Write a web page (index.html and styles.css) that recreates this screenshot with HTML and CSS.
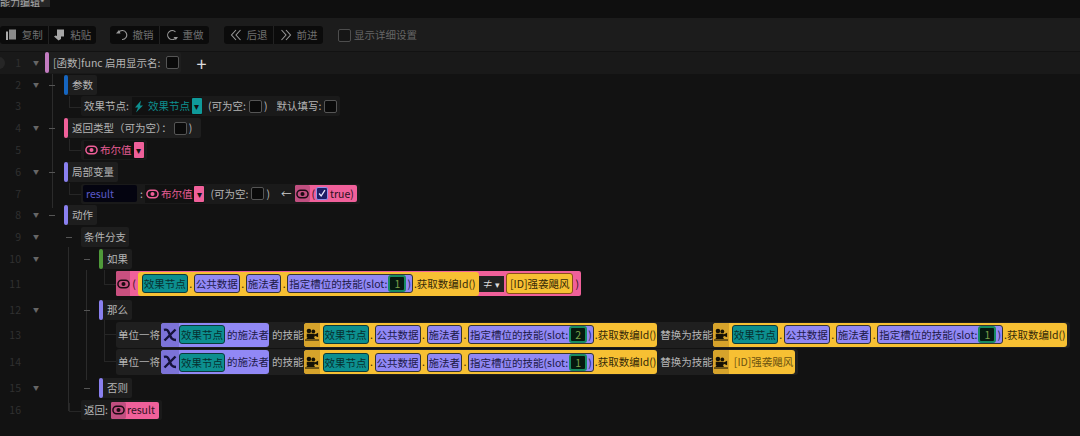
FILE: index.html
```html
<!DOCTYPE html>
<html lang="zh">
<head>
<meta charset="utf-8">
<title>函数编辑</title>
<link rel="stylesheet" href="styles.css">
</head>
<body>
<svg class="defs" width="0" height="0">
  <symbol id="eye" viewBox="0 0 14 10"><rect x="1" y="1" width="12" height="8" rx="4" fill="none" stroke="currentColor" stroke-width="1.600"/><circle cx="7" cy="5" r="2.200" fill="currentColor"/></symbol>
  <symbol id="chi" viewBox="0 0 14 14"><path d="M1 2c3-1 4 0 5.500 4S9 12 13 12M12.500 1.500L1.500 12.500" fill="none" stroke="currentColor" stroke-width="2.400"/></symbol>
  <symbol id="cam" viewBox="0 0 16 14"><circle cx="4.500" cy="3" r="2.600" fill="currentColor"/><circle cx="9.500" cy="3.500" r="2.200" fill="currentColor"/><path d="M2 6h9v4H2zM11 7l4-2v5l-4-1.500zM3 10l-1.500 2h10L10 10z" fill="currentColor"/><path d="M0 13.300h16" stroke="currentColor" stroke-width="1.200"/></symbol>
</svg>

<div class="tabbar"><div class="tab">能力编辑*</div></div>

<div class="toolbar">
  <div class="group first">
    <div class="tool"><svg class="ti" viewBox="0 0 12 12"><path d="M4 0.500h7v10H4z" fill="#8a8a8a"/><path d="M1 2.500h2v8.500h6v0H1z" fill="#aaa"/></svg>复制</div>
    <div class="tool"><svg class="ti" viewBox="0 0 12 12"><path d="M4 0.500h7v7H8v2.500l-2.500 1.500L1 7.500l1.500-1L4 7z" fill="#a5a5a5"/></svg>粘贴</div>
  </div>
  <div class="group">
    <div class="tool"><svg class="ti" viewBox="0 0 12 12"><path d="M2.500 3.500A4.500 4.500 0 1 1 6 10.500" fill="none" stroke="#999" stroke-width="1.100"/><path d="M0 4.500h4.500L3 1z" fill="#999"/></svg>撤销</div>
    <div class="tool"><svg class="ti" viewBox="0 0 12 12"><path d="M9.500 3A4.500 4.500 0 1 0 8.800 9.700" fill="none" stroke="#999" stroke-width="1.100"/><path d="M7.500 8h4.500l-2.200 3z" fill="#999"/></svg>重做</div>
  </div>
  <div class="group third">
    <div class="tool"><svg class="ti" viewBox="0 0 12 12"><path d="M6 1L1.500 6 6 11M10.500 1L6 6l4.500 5" fill="none" stroke="#999" stroke-width="1.100"/></svg>后退</div>
    <div class="tool"><svg class="ti" viewBox="0 0 12 12"><path d="M1.500 1L6 6l-4.500 5M6 1l4.500 5L6 11" fill="none" stroke="#999" stroke-width="1.100"/></svg>前进</div>
  </div>
  <label class="detail"><span class="box dim"></span>显示详细设置</label>
</div>

<main class="editor">
  <div class="guides">
    <i class="g g1"></i><i class="g g2"></i><i class="g g3"></i>
    <i class="t t3"></i><i class="t t5"></i><i class="t t7"></i><i class="t t11"></i><i class="t t13"></i><i class="t t14"></i><i class="t t16"></i>
  </div>

  <div class="row active"><span class="num">1</span><span class="fold">▼</span><div class="head lv0 pinkl"><span class="tx">[函数]func 启用显示名:</span><span class="box"></span></div><span class="plus">+</span></div>

  <div class="row"><span class="num">2</span><span class="fold">▼</span><div class="head lv1 blue"><span class="tx">参数</span></div></div>

  <div class="row"><span class="num">3</span><div class="line lv2">
    <span class="tx">效果节点:</span>
    <span class="typecell teal-t"><svg class="bolt" viewBox="0 0 10 12"><path d="M7 0L1 7h3l-2 5 7-7H6z" fill="currentColor"/></svg>效果节点<span class="drop teal-d">▾</span></span>
    <span class="tx paren">(可为空:</span><span class="box"></span><span class="tx closer">)</span><span class="tx dflt">默认填写:</span><span class="box"></span>
  </div></div>

  <div class="row"><span class="num">4</span><span class="fold">▼</span><div class="head lv1 pink"><span class="tx">返回类型（可为空）：</span><span class="box"></span><span class="tx closer">)</span></div></div>

  <div class="row"><span class="num">5</span><div class="line lv2">
    <span class="typecell pink-t"><svg class="eye"><use href="#eye"/></svg>布尔值<span class="drop pink-d">▾</span></span>
  </div></div>

  <div class="row"><span class="num">6</span><span class="fold">▼</span><div class="head lv1 lilac"><span class="tx">局部变量</span></div></div>

  <div class="row"><span class="num">7</span><div class="line lv2">
    <span class="input">result</span><span class="tx">:</span>
    <span class="typecell pink-t after-colon"><svg class="eye"><use href="#eye"/></svg>布尔值<span class="drop pink-d">▾</span></span>
    <span class="tx paren">(可为空:</span><span class="box"></span><span class="tx closer">)</span><span class="arrow">←</span>
    <span class="bool"><span class="bool-i"><svg class="eye dark"><use href="#eye"/></svg></span>(<span class="box checked"><svg viewBox="0 0 12 12"><path d="M2.500 6l2.500 3 4.500-7" fill="none" stroke="#e8e8ff" stroke-width="1.600"/></svg></span>true)</span>
  </div></div>

  <div class="row"><span class="num">8</span><span class="fold">▼</span><div class="head lv1 lilac"><span class="tx">动作</span></div></div>

  <div class="row"><span class="num">9</span><span class="fold">▼</span><div class="line lv2 plain"><span class="tx">条件分支</span></div></div>

  <div class="row"><span class="num">10</span><span class="fold">▼</span><div class="head lv3 green"><span class="tx">如果</span></div></div>

  <div class="row tall"><span class="num">11</span><div class="cond lv4">
    <span class="cond-i"><svg class="eye dark"><use href="#eye"/></svg></span><span class="par">(</span>
    <span class="yellow">
      <span class="chip teal">效果节点</span><span class="dot">.</span><span class="chip lil">公共数据</span><span class="dot">.</span><span class="chip lil">施法者</span><span class="dot">.</span><span class="chip lil slotchip">指定槽位的技能(slot:<span class="slot">1</span>)</span><span class="call">.获取数编Id()</span>
    </span>
    <span class="neq">≠<em>▾</em></span>
    <span class="yellow idchip">[ID]强袭飓风</span><span class="par">)</span>
  </div></div>

  <div class="row spaced"><span class="num">12</span><span class="fold">▼</span><div class="head lv3 lilac"><span class="tx">那么</span></div></div>

  <div class="row tall"><span class="num">13</span><div class="line lv4 big">
    <span class="lead">单位一将</span>
    <span class="unit"><span class="unit-i"><svg class="chi"><use href="#chi"/></svg></span><span class="chip teal">效果节点</span><span class="owner">的施法者</span></span>
    <span class="tx word">的技能</span>
    <span class="yellow sk"><span class="sk-i"><svg class="cam"><use href="#cam"/></svg></span><span class="chip teal">效果节点</span><span class="dot">.</span><span class="chip lil">公共数据</span><span class="dot">.</span><span class="chip lil">施法者</span><span class="dot">.</span><span class="chip lil slotchip">指定槽位的技能(slot:<span class="slot">2</span>)</span><span class="call">.获取数编Id()</span></span>
    <span class="tx word">替换为技能</span>
    <span class="yellow sk"><span class="sk-i"><svg class="cam"><use href="#cam"/></svg></span><span class="chip teal">效果节点</span><span class="dot">.</span><span class="chip lil">公共数据</span><span class="dot">.</span><span class="chip lil">施法者</span><span class="dot">.</span><span class="chip lil slotchip">指定槽位的技能(slot:<span class="slot">1</span>)</span><span class="call">.获取数编Id()</span></span>
  </div></div>

  <div class="row tall"><span class="num">14</span><div class="line lv4 big">
    <span class="lead">单位一将</span>
    <span class="unit"><span class="unit-i"><svg class="chi"><use href="#chi"/></svg></span><span class="chip teal">效果节点</span><span class="owner">的施法者</span></span>
    <span class="tx word">的技能</span>
    <span class="yellow sk"><span class="sk-i"><svg class="cam"><use href="#cam"/></svg></span><span class="chip teal">效果节点</span><span class="dot">.</span><span class="chip lil">公共数据</span><span class="dot">.</span><span class="chip lil">施法者</span><span class="dot">.</span><span class="chip lil slotchip">指定槽位的技能(slot:<span class="slot">1</span>)</span><span class="call">.获取数编Id()</span></span>
    <span class="tx word">替换为技能</span>
    <span class="yellow sk"><span class="sk-i"><svg class="cam"><use href="#cam"/></svg></span><span class="idtext">[ID]强袭飓风</span></span>
  </div></div>

  <div class="row spaced"><span class="num">15</span><span class="fold">▼</span><div class="head lv3 lilac"><span class="tx">否则</span></div></div>

  <div class="row"><span class="num">16</span><div class="line lv2 ret">
    <span class="tx">返回:</span>
    <span class="retval"><span class="bool-i"><svg class="eye dark"><use href="#eye"/></svg></span>result</span>
  </div></div>
</main>
</body>
</html>
```
FILE: styles.css
```css
* { box-sizing: border-box; }
html, body { margin: 0; height: 100%; }
body {
  width: 1080px;
  height: 436px;
  overflow: hidden;
  background: #121212;
  color: #bdbdbd;
  font: 10.5px/14px "Noto Sans CJK SC", "Noto Sans", sans-serif;
  display: flex;
  flex-direction: column;
}
.defs { position: absolute; }

.tabbar { height: 18px; background: #0f0f0f; flex: none; }
.tab { width: 50px; height: 7px; overflow: hidden; background: #262626; color: #aaa; font-size: 10px; line-height: 6px; }

.toolbar { height: 33px; flex: none; background: #1c1c1c; display: flex; align-items: center; gap: 14px; padding-top: 1px; }
.group { display: flex; width: 99px; height: 18px; background: #0b0b0b; border-radius: 3px; }
.group.first { width: 96px; }
.group.third { margin-left: 1px; }
.tool { flex: 1; display: flex; align-items: center; justify-content: center; gap: 5px; color: #6f6f6f; border-left: 1px solid #222; }
.tool:first-child { border-left: 0; }
.ti { width: 12px; height: 12px; flex: none; }
.detail { display: flex; align-items: center; gap: 3px; margin-left: 1px; color: #666; }
.box { display: inline-block; flex: none; width: 13px; height: 13px; background: #0a0a0a; border: 1.500px solid #555; border-radius: 2px; }
.box.dim { border-color: #4d4d4d; background: #161616; }
.box.checked { background: #1d1d66; width: 12px; height: 13px; margin: 0 2px 0 1px; border-color: #8f8fe8; }
.box.checked svg { display: block; width: 100%; height: 100%; }

.editor { position: relative; flex: 1; padding-top: 1px; }
.row { position: relative; display: flex; align-items: center; height: 21.800px; }
.row.tall { height: 27.600px; }
.row.spaced { margin-top: 1.500px; }
.row.active { background: #191919; }
.row.active::before { content: ""; position: absolute; left: -7px; top: 5px; width: 12px; height: 12px; border-radius: 50%; background: #262626; }
.num { position: absolute; left: 0; width: 21px; text-align: right; color: #303030; }
.fold { position: absolute; left: 30px; width: 12px; text-align: center; color: #666; font-size: 6px; }

.guides { position: absolute; inset: 0; pointer-events: none; }
.g, .t { position: absolute; display: block; }
.g { width: 1px; background: #2b2b2b; }
.g1 { left: 52px; top: 23px; height: 134px; }
.g2 { left: 68px; top: 196px; height: 164px; }
.g3 { left: 86px; top: 219px; height: 110px; }
.t { width: 12px; border-left: 1px solid #262626; border-bottom: 1px solid #262626; }
.t3 { left: 69px; top: 45px; height: 12px; }
.t5 { left: 69px; top: 88px; height: 12px; }
.t7 { left: 69px; top: 132px; height: 12px; }
.t11 { left: 104px; top: 219px; height: 15px; }
.t13 { left: 104px; top: 269px; height: 15px; }
.t14 { left: 104px; top: 276px; height: 35px; }
.t16 { left: 69px; top: 352px; height: 9px; }

.head, .line { position: relative; display: flex; align-items: center; height: 20px; background: #1e1e1e; border-radius: 2px; white-space: nowrap; }
.head { padding: 0 4px 0 8px; gap: 3px; }
.head::before { content: ""; position: absolute; left: 0; top: 0; bottom: 0; width: 4px; border-radius: 2px; background: var(--bar); }
.head::after { content: ""; position: absolute; left: -15px; top: 10px; width: 6px; height: 1px; background: #555; }
.lv0 { margin-left: 45px; height: 21px; padding-right: 2px; }
.lv0 .box { margin-left: 3px; }
.lv0::after { display: none; }
.lv1 { margin-left: 64px; }
.lv2 { margin-left: 81px; padding: 0 3px; gap: 3px; background: #1a1a1a; }
.lv3 { margin-left: 99px; }
.lv4 { margin-left: 116px; }
.plain { background: #1e1e1e; }
.plain::after { content: ""; position: absolute; left: -15px; top: 10px; width: 6px; height: 1px; background: #555; }
.pinkl { --bar: #c27bc0; }
.blue { --bar: #1565c0; }
.pink { --bar: #f0609a; padding-right: 9px; }
.lilac { --bar: #8a80f0; }
.green { --bar: #4f9a3a; }
.tx, .lead { color: #b5b5b5; }
.paren { margin-left: 3px; }
.closer { margin-left: -1px; }
.dflt { margin-left: 6px; }
.pink .box { margin-left: -1px; }
.plus { margin-left: 15px; color: #ddd; font-size: 18px; line-height: 20px; }

.typecell { display: inline-flex; align-items: center; height: 18px; background: #111; gap: 2px; padding-left: 1px; }
.after-colon { margin-left: -1px; }
.teal-t { color: #0e8f8f; padding-left: 2px; }
.pink-t { color: #e45c93; }
.bolt { width: 10px; height: 13px; margin-right: 2px; }
.eye { width: 13px; height: 10px; flex: none; color: #ef5f98; }
.eye.dark { color: #1a0a12; }
.drop { width: 10px; height: 16px; display: inline-flex; align-items: center; justify-content: center; color: #111; font-size: 10px; border-radius: 1px; }
.teal-d { background: #0f9a9a; }
.pink-d { background: #f0609a; }
.input { width: 54px; height: 17px; margin-left: -1px; padding-left: 3px; background: #040410; color: #5a5ac8; border-radius: 2px; line-height: 17px; }
.arrow { color: #ccc; margin: 0 1px 0 8px; }

.bool, .retval { display: inline-flex; align-items: center; height: 17px; background: #f0609a; color: #2a1020; border-radius: 2px; padding-right: 3px; }
.bool-i { display: inline-flex; align-items: center; justify-content: center; width: 15px; height: 100%; margin-right: 1px; background: #c04f80; border-radius: 2px; }

.big { height: 26px; background: #1f1f1f; padding: 0 3px 0 2px; gap: 0; border-radius: 3px; }
.cond { display: flex; align-items: center; height: 25px; width: 465px; background: #f0609a; color: #2a1020; border-radius: 2px; white-space: nowrap; }
.cond-i { width: 15px; height: 100%; background: #c8507f; border-radius: 2px 0 0 2px; display: inline-flex; align-items: center; justify-content: center; }
.cond .call { padding-right: 3px; }
.par { margin: 0 2px; }
.yellow { display: inline-flex; align-items: center; height: 24px; background: #f7c033; color: #352a08; border-radius: 3px; padding: 0 0 0 4px; }
.chip { display: inline-block; height: 19px; line-height: 17px; padding: 0 1px; border: 1px solid #333; border-radius: 3px; }
.teal { background: #0c8f8f; color: #073030; border-color: #0b3a3a; }
.lil { background: #9188f5; color: #1d1a48; }
.dot { width: 6px; text-align: center; }
.slotchip { display: inline-flex; align-items: center; }
.slot { width: 18px; height: 17px; margin: 0 1px; background: #06180f; color: #7ca04a; text-align: center; border: 2px solid #178a62; border-radius: 3px; line-height: 13px; }
.call { margin-left: 1px; padding-right: 1px; }
.neq { width: 27px; height: 16px; background: #222; color: #ddd; text-align: center; line-height: 16px; }
.neq em { font-style: normal; font-size: 9px; margin-left: 2px; }
.idchip { height: 21px; margin-left: 2px; border: 1px solid #8a5018; padding: 0 3px; }

.unit { display: inline-flex; align-items: center; height: 24px; margin-left: 1px; background: #9188f5; color: #1d1a48; border-radius: 3px; }
.owner { margin-left: 2px; }
.word { margin-left: 3px; }
.unit-i { width: 18px; height: 100%; background: #7c73d8; border-radius: 3px 0 0 3px; display: inline-flex; align-items: center; justify-content: center; }
.chi { width: 14px; height: 14px; color: #15123a; }
.sk { padding-left: 0; }
.sk-i { width: 16px; height: 100%; margin-right: 3px; background: #d6a32b; border-radius: 3px 0 0 3px; display: inline-flex; align-items: center; justify-content: center; }
.cam { width: 14px; height: 13px; color: #141005; }
.idtext { padding: 0 2px; color: #6b5210; }
.ret { height: 20px; }
.retval { padding-right: 4px; color: #30121f; }
```
